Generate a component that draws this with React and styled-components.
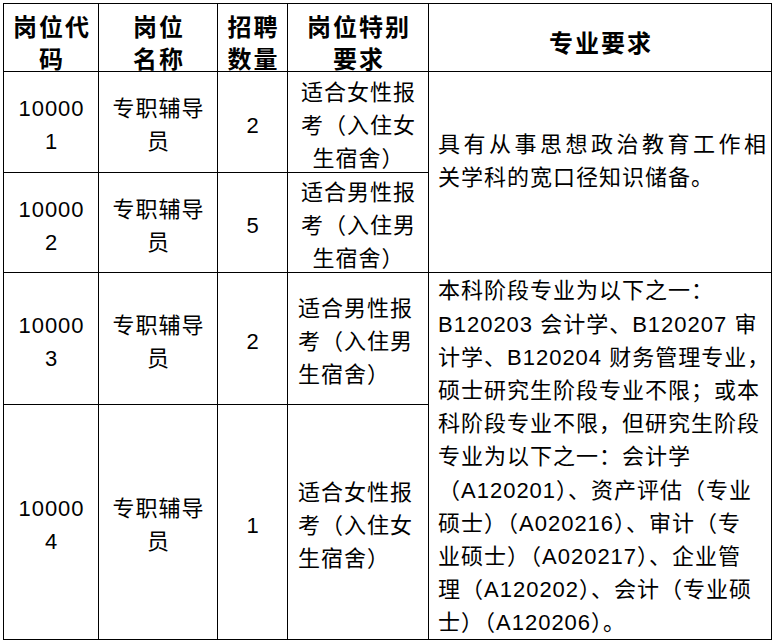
import React from 'react';
import styled, { createGlobalStyle } from 'styled-components';

const GlobalStyle = createGlobalStyle`
  html, body {
    margin: 0;
    padding: 0;
    background: #fff;
  }
`;

const rows = [
  { code: ['10000', '1'], count: '2', note: ['适合女性报', '考（入住女', '生宿舍）'], noteAlign: 'center' },
  { code: ['10000', '2'], count: '5', note: ['适合男性报', '考（入住男', '生宿舍）'], noteAlign: 'center' },
  { code: ['10000', '3'], count: '2', note: ['适合男性报', '考（入住男', '生宿舍）'], noteAlign: 'left' },
  { code: ['10000', '4'], count: '1', note: ['适合女性报', '考（入住女', '生宿舍）'], noteAlign: 'left' },
];

const headers = [['岗位代', '码'], ['岗位', '名称'], ['招聘', '数量'], ['岗位特别', '要求'], ['专业要求']];

const majorA = [
  { text: '具有从事思想政治教育工作相', justify: true },
  { text: '关学科的宽口径知识储备。' },
];

const majorB = [
  '本科阶段专业为以下之一：',
  'B120203 会计学、B120207 审',
  '计学、B120204 财务管理专业，',
  '硕士研究生阶段专业不限；或本',
  '科阶段专业不限，但研究生阶段',
  '专业为以下之一：会计学',
  '（A120201）、资产评估（专业',
  '硕士）（A020216）、审计（专',
  '业硕士）（A020217）、企业管',
  '理（A120202）、会计（专业硕',
  '士）（A120206）。',
];

const App = () => {
  return (
    <>
      <GlobalStyle />
      <Page>
        <Grid>
          {headers.map((h) => (
            <HeadCell key={h.join('')}>
              {h.map((l) => <Line key={l}>{l}</Line>)}
            </HeadCell>
          ))}
          {rows.map((r, i) => (
            <React.Fragment key={i}>
              <Cell>{r.code.map((l) => <Line key={l}>{l}</Line>)}</Cell>
              <Cell>
                <Line>专职辅导</Line>
                <Line>员</Line>
              </Cell>
              <Cell><Line>{r.count}</Line></Cell>
              <Cell $align={r.noteAlign}>
                {r.note.map((l) => <Line key={l}>{l}</Line>)}
              </Cell>
              {i === 0 && (
                <MajorCell $span={2} $top={0} $bottom={22}>
                  {majorA.map((l) => (
                    <Line key={l.text} $justify={l.justify}>{l.text}</Line>
                  ))}
                </MajorCell>
              )}
              {i === 2 && (
                <MajorCell $span={2} $top={2} $bottom={0}>
                  {majorB.map((l) => <Line key={l}>{l}</Line>)}
                </MajorCell>
              )}
            </React.Fragment>
          ))}
        </Grid>
      </Page>
    </>
  );
};

const Page = styled.div`
  padding: 3px 0 0 3px;
  width: 775px;
  height: 641px;
  box-sizing: border-box;
  overflow: hidden;
  background: #fff;
`;

const Grid = styled.div`
  display: grid;
  grid-template-columns: 94px 118px 69px 140px 342px;
  grid-template-rows: 67px 100px 99px 131px 234px;
  gap: 1px;
  width: max-content;
  border: 1px solid #000;
  background: #000;
  color: #000;
  font-family: "Liberation Sans", "Noto Sans CJK SC", sans-serif;
`;

const CellBase = styled.div`
  display: flex;
  flex-direction: column;
  justify-content: center;
  background: #fff;
  box-sizing: border-box;
  min-height: 0;
`;

const HeadCell = styled(CellBase)`
  font-family: "Noto Sans CJK SC", sans-serif;
  font-weight: 700;
  font-size: 24px;
  letter-spacing: 2px;
  line-height: 32px;
  text-align: center;
  padding: 8px 0 0 2px;
`;

const Cell = styled(CellBase)`
  font-size: 22px;
  letter-spacing: 1px;
  line-height: 33px;
  text-align: ${(p) => p.$align || 'center'};
  padding: ${(p) => (p.$align === 'left' ? '6px 0 0 10px' : '6px 0 0 1px')};
`;

const MajorCell = styled(CellBase)`
  grid-row: span ${(p) => p.$span};
  font-size: 22px;
  letter-spacing: 1px;
  line-height: 33.2px;
  text-align: left;
  padding: ${(p) => p.$top}px 4px ${(p) => p.$bottom}px 9px;
`;

const Line = styled.span`
  display: block;
  white-space: nowrap;
  text-align: ${(p) => (p.$justify ? 'justify' : 'inherit')};
  text-align-last: ${(p) => (p.$justify ? 'justify' : 'auto')};
`;

export default App;
